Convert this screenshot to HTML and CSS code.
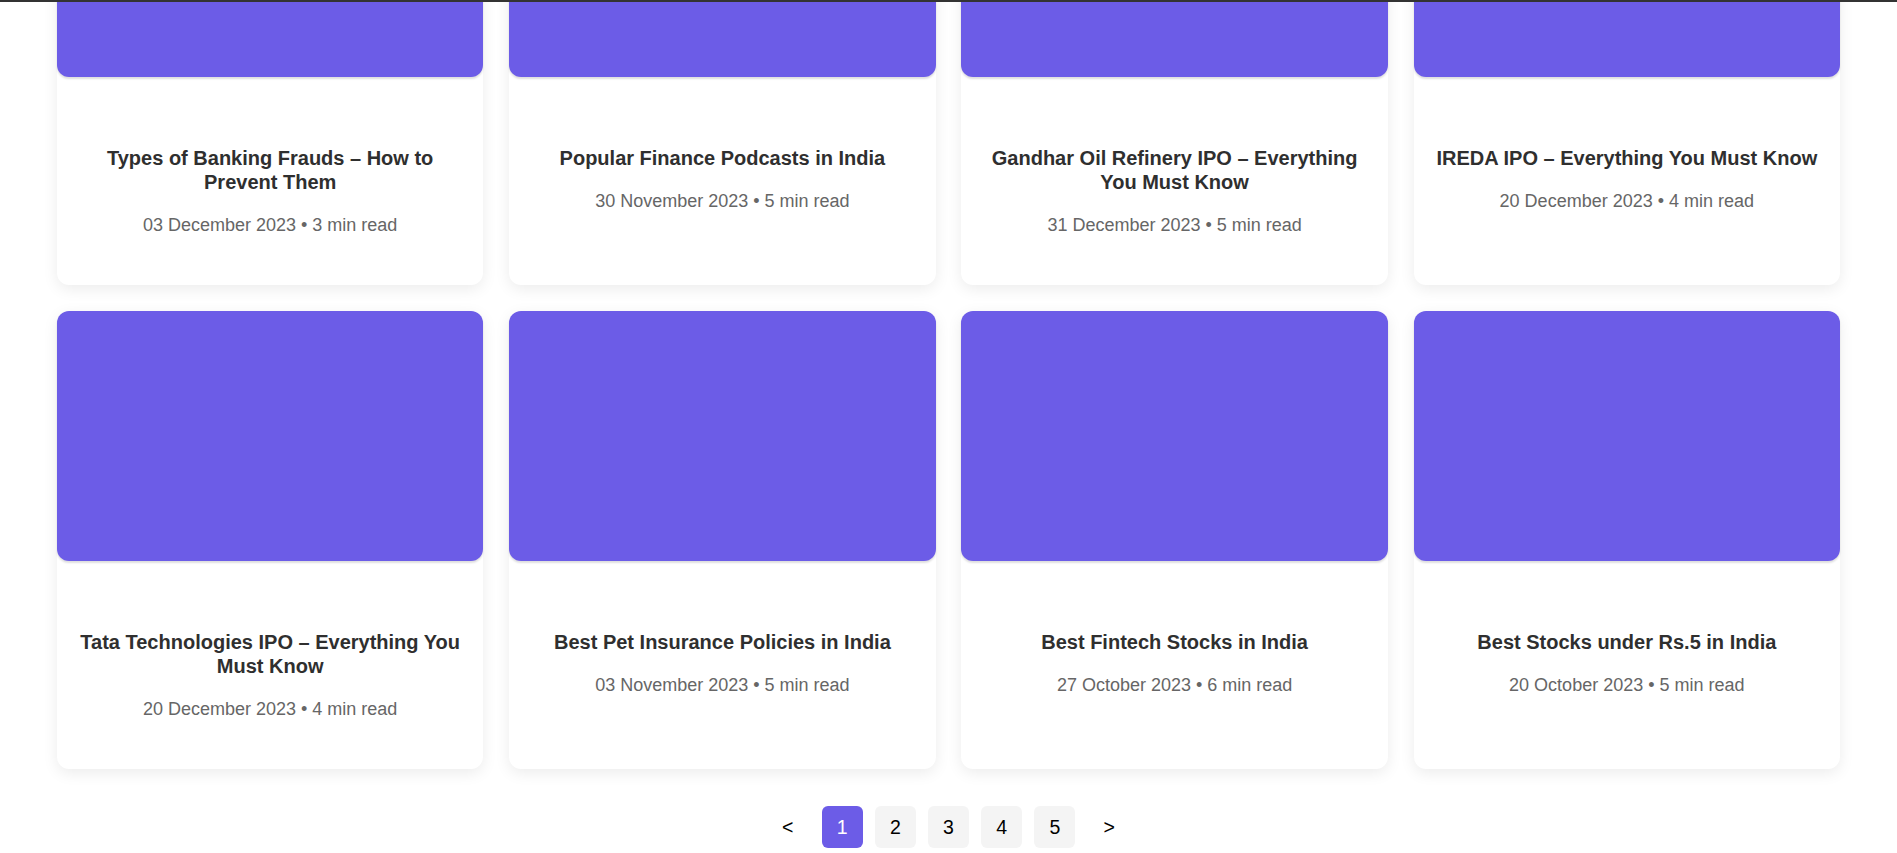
FILE: index.html
```html
<!DOCTYPE html>
<html lang="en">
<head>
<meta charset="utf-8">
<title>Blog</title>
<link rel="stylesheet" href="styles.css">
</head>
<body>
<div class="topbar"></div>
<main class="blog">
  <section class="posts">
    <article class="card">
      <div class="thumb"></div>
      <div class="body">
        <h3 class="title">Types of Banking Frauds – How to Prevent Them</h3>
        <p class="meta">03 December 2023 • 3 min read</p>
      </div>
    </article>
    <article class="card">
      <div class="thumb"></div>
      <div class="body">
        <h3 class="title">Popular Finance Podcasts in India</h3>
        <p class="meta">30 November 2023 • 5 min read</p>
      </div>
    </article>
    <article class="card">
      <div class="thumb"></div>
      <div class="body">
        <h3 class="title">Gandhar Oil Refinery IPO – Everything You Must Know</h3>
        <p class="meta">31 December 2023 • 5 min read</p>
      </div>
    </article>
    <article class="card">
      <div class="thumb"></div>
      <div class="body">
        <h3 class="title">IREDA IPO – Everything You Must Know</h3>
        <p class="meta">20 December 2023 • 4 min read</p>
      </div>
    </article>
    <article class="card">
      <div class="thumb"></div>
      <div class="body">
        <h3 class="title">Tata Technologies IPO – Everything You Must Know</h3>
        <p class="meta">20 December 2023 • 4 min read</p>
      </div>
    </article>
    <article class="card">
      <div class="thumb"></div>
      <div class="body">
        <h3 class="title">Best Pet Insurance Policies in India</h3>
        <p class="meta">03 November 2023 • 5 min read</p>
      </div>
    </article>
    <article class="card">
      <div class="thumb"></div>
      <div class="body">
        <h3 class="title">Best Fintech Stocks in India</h3>
        <p class="meta">27 October 2023 • 6 min read</p>
      </div>
    </article>
    <article class="card">
      <div class="thumb"></div>
      <div class="body">
        <h3 class="title">Best Stocks under Rs.5 in India</h3>
        <p class="meta">20 October 2023 • 5 min read</p>
      </div>
    </article>
  </section>
  <nav class="pagination">
    <button class="page-btn arrow">&lt;</button>
    <button class="page-btn active">1</button>
    <button class="page-btn">2</button>
    <button class="page-btn">3</button>
    <button class="page-btn">4</button>
    <button class="page-btn">5</button>
    <button class="page-btn arrow">&gt;</button>
  </nav>
</main>
</body>
</html>
```
FILE: styles.css
```css
html, body {
  margin: 0;
  padding: 0;
  background: #ffffff;
}

body {
  font-family: "Liberation Sans", Arial, sans-serif;
  color: #333333;
  overflow: hidden;
}

.topbar {
  position: fixed;
  top: 0;
  left: 0;
  right: 0;
  height: 2px;
  background: #333333;
  z-index: 10;
}

.blog {
  padding: 0 3%;
}

.posts {
  display: grid;
  grid-template-columns: repeat(4, 1fr);
  gap: 25.7px;
  margin-top: -173.4px;
}

.card {
  display: flex;
  flex-direction: column;
  background: #ffffff;
  border-radius: 12px;
  box-shadow: 0 4px 15px rgba(0, 0, 0, 0.08);
}

.thumb {
  height: 250px;
  background: #6c5ce7;
  border-radius: 12px;
  box-shadow: 0 2px 2px rgba(0, 0, 0, 0.13);
}

.body {
  flex: 1;
  padding: 69.7px 20px 48.6px;
  text-align: center;
}

.title {
  margin: 0 0 21px;
  font-size: 20px;
  line-height: 24px;
  font-weight: 700;
  color: #2f2f2f;
}

.meta {
  margin: 0;
  font-size: 18px;
  color: #666666;
}

.pagination {
  display: flex;
  justify-content: center;
  gap: 12.3px;
  margin-top: 37.3px;
}

.page-btn {
  font-family: "Liberation Sans", Arial, sans-serif;
  font-size: 19.5px;
  line-height: 22px;
  padding: 10px 15px;
  border: none;
  border-radius: 6px;
  background: #f4f4f4;
  color: #000000;
}

.page-btn.active {
  background: #6c5ce7;
  color: #ffffff;
}

.page-btn.arrow {
  background: transparent;
  padding: 10px 16px;
}
```
